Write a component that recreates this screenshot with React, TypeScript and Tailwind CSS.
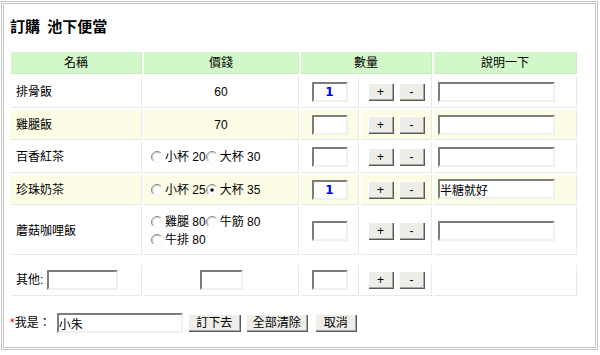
import React from "react";

const cell = "p-0 border-b border-r border-[#e8e8e8]";
const head = "p-0 font-normal text-center bg-[#d2f7c8] border-b border-r border-[#c9e9bf]";
const yellow = "bg-[#fdfde6]";
const inset =
  "h-[20px] bg-white border-2 border-t-[#7d7d7d] border-l-[#7d7d7d] border-b-[#f0f0f0] border-r-[#f0f0f0] outline-none";
const btn =
  "h-[18px] bg-[#efede8] text-[12px] leading-none shadow-[inset_1px_1px_0_#ffffff,inset_-1px_-1px_0_#5a5a5a,inset_-2px_-2px_0_#a6a6a6] flex items-center justify-center";

function Radio({ checked = false }: { checked?: boolean }) {
  return (
    <svg width="12" height="12" viewBox="0 0 12 12" className="shrink-0">
      <circle cx="6" cy="6" r="4.5" fill="#fff" />
      <path d="M2.1 9.9 A5.5 5.5 0 0 1 9.9 2.1" fill="none" stroke="#8a8a8a" strokeWidth="1" />
      <path d="M2.8 9.2 A4.5 4.5 0 0 1 9.2 2.8" fill="none" stroke="#c4c4c4" strokeWidth="1" />
      <path d="M9.9 2.1 A5.5 5.5 0 0 1 2.1 9.9" fill="none" stroke="#f4f4f4" strokeWidth="1" />
      {checked && <circle cx="6" cy="6" r="1.8" fill="#111" />}
    </svg>
  );
}

function Opt({ label, checked }: { label: string; checked?: boolean }) {
  return (
    <span className="flex items-center">
      <Radio checked={checked} />
      <span className="ml-[2px] whitespace-nowrap">{label}</span>
    </span>
  );
}

function Qty({ value = "" }: { value?: string }) {
  return (
    <div className="flex justify-center">
      <input
        readOnly
        value={value}
        className={`${inset} w-[36px] text-center font-bold text-[#0000ff] [font-family:'DejaVu_Sans',sans-serif]`}
      />
    </div>
  );
}

function PlusMinus() {
  return (
    <div className="flex justify-center gap-[5px]">
      <button className={`${btn} w-[26px]`}>+</button>
      <button className={`${btn} w-[26px]`}>-</button>
    </div>
  );
}

function Note({ value = "" }: { value?: string }) {
  return (
    <div className="pl-[4px]">
      <input readOnly value={value} className={`${inset} w-[117px]`} />
    </div>
  );
}

type Row = { name: string; price: React.ReactNode; qty?: string; note?: string; h: string };

const rows: Row[] = [
  { name: "排骨飯", price: <div className="text-center">60</div>, qty: "1", h: "h-[32px]" },
  { name: "雞腿飯", price: <div className="text-center">70</div>, h: "h-[30px]" },
  {
    name: "百香紅茶",
    price: (
      <div className="flex pl-[7px]">
        <Opt label="小杯 20" />
        <Opt label="大杯 30" />
      </div>
    ),
    h: "h-[31px]",
  },
  {
    name: "珍珠奶茶",
    price: (
      <div className="flex pl-[7px]">
        <Opt label="小杯 25" />
        <Opt label="大杯 35" checked />
      </div>
    ),
    qty: "1",
    note: "半糖就好",
    h: "h-[30px]",
  },
  {
    name: "蘑菇咖哩飯",
    price: (
      <div className="pl-[7px] flex flex-col">
        <div className="flex h-[18px] items-center">
          <Opt label="雞腿 80" />
          <Opt label="牛筋 80" />
        </div>
        <div className="flex h-[18px] items-center">
          <Opt label="牛排 80" />
        </div>
      </div>
    ),
    h: "h-[48px]",
  },
];

export default function App() {
  return (
    <div className="w-[600px] h-[355px] bg-white pt-[1px] pl-[1px] text-[12px] text-black [font-family:'Liberation_Sans','Noto_Sans_CJK_TC',sans-serif]">
      <div className="w-[597px] h-[349px] border-[3px] border-double border-[#c4c4c4]">
        <h1 className="h-[46px] flex items-center pl-[6px] text-[15px] font-bold [word-spacing:3px]">
          訂購 池下便當
        </h1>
        <table className="ml-[5px] w-[570px] table-fixed border-separate border-spacing-[2px]">
          <colgroup>
            <col className="w-[131px]" />
            <col className="w-[155px]" />
            <col className="w-[58px]" />
            <col className="w-[71px]" />
            <col className="w-[143px]" />
          </colgroup>
          <thead>
            <tr className="h-[22px]">
              <th className={head}>名稱</th>
              <th className={head}>價錢</th>
              <th className={head} colSpan={2}>
                數量
              </th>
              <th className={head}>說明一下</th>
            </tr>
          </thead>
          <tbody>
            {rows.map((r, i) => {
              const bg = i % 2 === 1 ? yellow : "bg-white";
              return (
                <tr key={r.name} className={r.h}>
                  <td className={`${cell} ${bg} pl-[5px]`}>{r.name}</td>
                  <td className={`${cell} ${bg}`}>{r.price}</td>
                  <td className={`${cell} ${bg}`}>
                    <Qty value={r.qty} />
                  </td>
                  <td className={`${cell} ${bg}`}>
                    <PlusMinus />
                  </td>
                  <td className={`${cell} ${bg}`}>
                    <Note value={r.note} />
                  </td>
                </tr>
              );
            })}
            <tr className="h-[6px]">
              <td colSpan={5} className="p-0" />
            </tr>
            <tr className="h-[31px]">
              <td className={`${cell} bg-white pl-[5px]`}>
                <div className="flex items-center">
                  <span>其他:</span>
                  <input readOnly className={`${inset} w-[71px] ml-[4px]`} />
                </div>
              </td>
              <td className={`${cell} bg-white`}>
                <div className="flex justify-center">
                  <input readOnly className={`${inset} w-[43px]`} />
                </div>
              </td>
              <td className={`${cell} bg-white`}>
                <Qty />
              </td>
              <td className={`${cell} bg-white`}>
                <PlusMinus />
              </td>
              <td className={`${cell} bg-white`} />
            </tr>
          </tbody>
        </table>
        <div className="mt-[16px] h-[18px] flex items-center pl-[6px]">
          <span className="text-[#ff0000]">*</span>
          <span>我是：</span>
          <input readOnly value="小朱" className={`${inset} h-[18px] w-[126px] ml-[6px]`} />
          <button className={`${btn} h-[17px] w-[53px] ml-[5px]`}>訂下去</button>
          <button className={`${btn} h-[17px] w-[62px] ml-[5px]`}>全部清除</button>
          <button className={`${btn} h-[17px] w-[42px] ml-[7px]`}>取消</button>
        </div>
      </div>
    </div>
  );
}
